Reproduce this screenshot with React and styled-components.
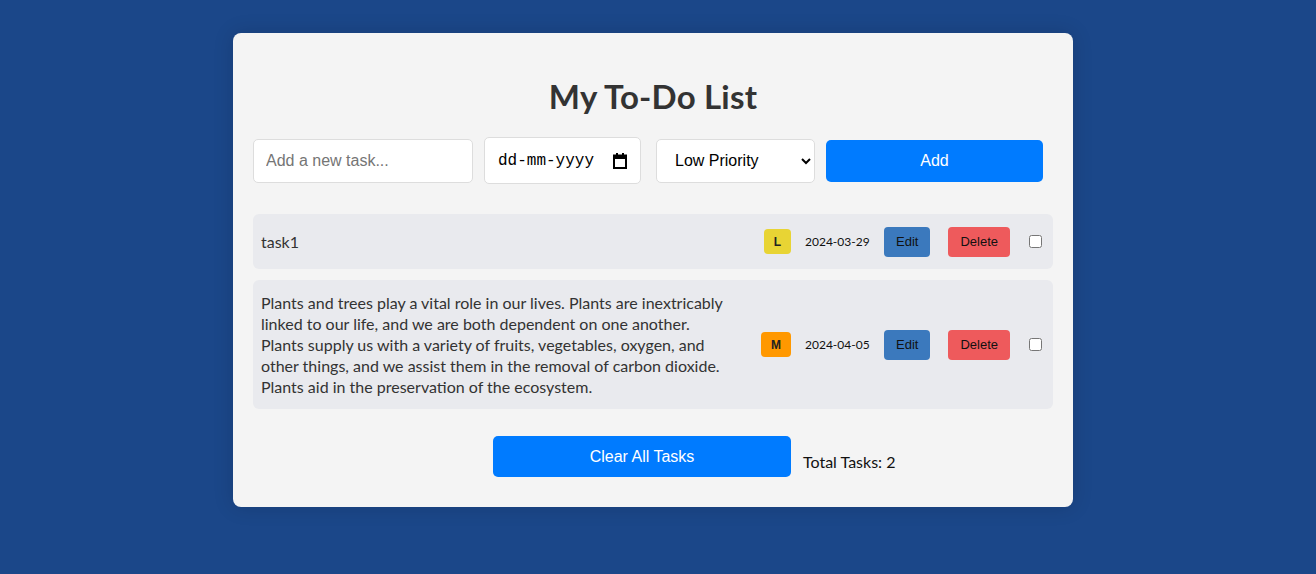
import React from 'react'
import styled, { createGlobalStyle } from 'styled-components'

const GlobalStyle = createGlobalStyle`
  body {
    margin: 0;
    background: #1b4789;
    font-family: Lato, 'Noto Sans', sans-serif;
  }
`

const tasks = [
  { id: 1, text: 'task1', priority: 'L', date: '2024-03-29' },
  {
    id: 2,
    text: 'Plants and trees play a vital role in our lives. Plants are inextricably linked to our life, and we are both dependent on one another. Plants supply us with a variety of fruits, vegetables, oxygen, and other things, and we assist them in the removal of carbon dioxide. Plants aid in the preservation of the ecosystem.',
    priority: 'M',
    date: '2024-04-05',
  },
]

const badgeColors = { L: '#e8d434', M: '#ff9800', H: '#f44336' }

const CalendarIcon = () => (
  <svg width='14' height='16' viewBox='0 0 14 16'>
    <rect x='3' y='0' width='2' height='3' fill='#000' />
    <rect x='9' y='0' width='2' height='3' fill='#000' />
    <rect x='1' y='2.5' width='12' height='12.5' fill='none' stroke='#000' strokeWidth='2' />
    <rect x='1' y='2' width='12' height='4' fill='#000' />
  </svg>
)

export default function App() {
  return (
    <>
      <GlobalStyle />
      <Page>
        <Card>
          <Title>My To-Do List</Title>
          <Form>
            <TextInput type='text' placeholder='Add a new task...' />
            <DateField>
              <DateText type='text' placeholder='dd-mm-yyyy' />
              <CalendarIcon />
            </DateField>
            <Select defaultValue='low'>
              <option value='low'>Low Priority</option>
              <option value='medium'>Medium Priority</option>
              <option value='high'>High Priority</option>
            </Select>
            <AddButton type='button'>Add</AddButton>
          </Form>

          <List>
            {tasks.map((task) => (
              <Row key={task.id}>
                <TaskText>{task.text}</TaskText>
                <Actions>
                  <Badge color={badgeColors[task.priority]}>{task.priority}</Badge>
                  <DueDate>{task.date}</DueDate>
                  <SmallButton bg='#3b79bd'>Edit</SmallButton>
                  <SmallButton bg='#ee5a5c'>Delete</SmallButton>
                  <Check type='checkbox' />
                </Actions>
              </Row>
            ))}
          </List>

          <Footer>
            <ClearButton type='button'>Clear All Tasks</ClearButton>
            <Total>Total Tasks: {tasks.length}</Total>
          </Footer>
        </Card>
      </Page>
    </>
  )
}

const Page = styled.div`
  min-height: 574px;
  display: flex;
  justify-content: center;
  padding: 33px 10px 0 0;
  box-sizing: border-box;
`

const Card = styled.div`
  width: 840px;
  height: 474px;
  box-sizing: border-box;
  padding: 20px;
  background: #f4f4f4;
  border-radius: 8px;
  box-shadow: 0 0 20px rgba(0, 0, 0, 0.15);
`

const Title = styled.h1`
  margin: 23px 0 0;
  height: 41px;
  line-height: 41px;
  text-align: center;
  font-size: 33px;
  font-weight: 700;
  letter-spacing: 0.2px;
  color: #333;
`

const Form = styled.div`
  margin-top: 20px;
  height: 47px;
  display: flex;
  align-items: center;
`

const fieldBase = `
  box-sizing: border-box;
  border: 1px solid #ddd;
  border-radius: 5px;
  background: #fff;
  font-size: 16px;
  outline: none;
`

const TextInput = styled.input`
  ${fieldBase}
  width: 220px;
  height: 44px;
  padding: 0 12px;
  font-family: 'Liberation Sans', Arial, sans-serif;
  color: #333;
  &::placeholder {
    color: #757575;
  }
`

const DateField = styled.label`
  ${fieldBase}
  margin-left: 11px;
  width: 157px;
  height: 47px;
  padding: 0 13px 0 13px;
  display: flex;
  align-items: center;
  gap: 2px;
`

const DateText = styled.input`
  flex: 1;
  min-width: 0;
  border: none;
  padding: 0;
  background: transparent;
  outline: none;
  font-family: 'Liberation Mono', monospace;
  font-size: 16px;
  &::placeholder {
    color: #000;
  }
`

const Select = styled.select`
  ${fieldBase}
  margin-left: 15px;
  width: 159px;
  height: 44px;
  padding: 0 8px 0 14px;
  font-family: 'Liberation Sans', Arial, sans-serif;
  color: #000;
`

const AddButton = styled.button`
  margin-left: 11px;
  width: 217px;
  height: 42px;
  border: none;
  border-radius: 5px;
  background: #007bff;
  color: #fff;
  font-family: 'Liberation Sans', Arial, sans-serif;
  font-size: 16px;
`

const List = styled.div`
  margin-top: 30px;
  display: flex;
  flex-direction: column;
  gap: 11px;
`

const Row = styled.div`
  display: flex;
  align-items: center;
  min-height: 55px;
  box-sizing: border-box;
  padding: 12px 11px 12px 8px;
  background: #e9eaee;
  border-radius: 6px;
`

const TaskText = styled.div`
  flex: 1;
  max-width: 468px;
  font-size: 16px;
  line-height: 21px;
  color: #333;
`

const Actions = styled.div`
  margin-left: auto;
  display: flex;
  align-items: center;
`

const Badge = styled.span`
  display: inline-flex;
  align-items: center;
  justify-content: center;
  height: 25px;
  min-width: 25px;
  padding: 0 10px;
  box-sizing: border-box;
  border-radius: 4px;
  background: ${(p) => p.color};
  color: #222;
  font-family: 'Liberation Sans', Arial, sans-serif;
  font-size: 12px;
  font-weight: 700;
`

const DueDate = styled.span`
  width: 61px;
  margin-left: 14px;
  white-space: nowrap;
  font-size: 12px;
  color: #111;
`

const SmallButton = styled.button`
  margin-left: 18px;
  height: 30px;
  padding: 0 12px;
  border: none;
  border-radius: 4px;
  background: ${(p) => p.bg};
  color: #111;
  font-family: 'Liberation Sans', Arial, sans-serif;
  font-size: 13px;
`

const Check = styled.input`
  margin: 0 0 0 19px;
  width: 13px;
  height: 13px;
`

const Footer = styled.div`
  margin-top: 27px;
  padding-left: 240px;
  display: flex;
  align-items: flex-end;
`

const ClearButton = styled.button`
  width: 298px;
  height: 41px;
  border: none;
  border-radius: 5px;
  background: #007bff;
  color: #fff;
  font-family: 'Liberation Sans', Arial, sans-serif;
  font-size: 16px;
`

const Total = styled.span`
  margin-left: 12px;
  padding-bottom: 5px;
  font-size: 16px;
  line-height: 21px;
  color: #111;
`
